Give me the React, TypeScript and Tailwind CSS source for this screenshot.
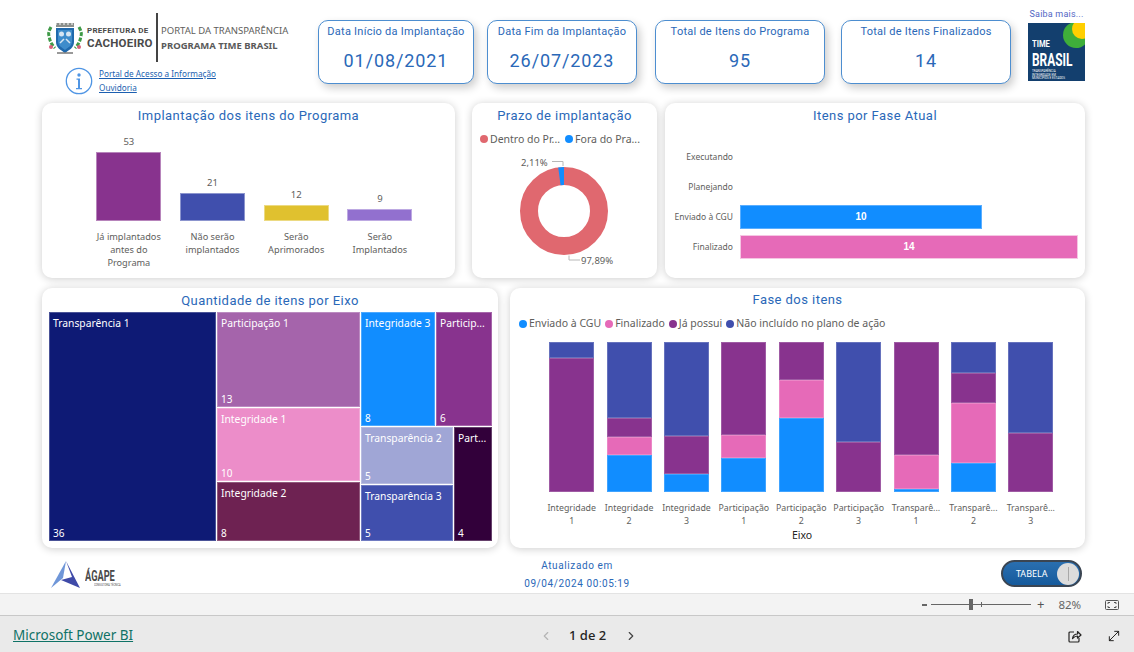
import { ChevronLeft, ChevronRight, MoveDiagonal } from "lucide-react";

const label = "font-['Noto_Sans',sans-serif] text-[#605e5c]";
const titleStyle = "font-['Roboto',sans-serif] text-[13px] tracking-[0.45px] text-[#2a68b8] text-center leading-[18px]";
const cardStyle = "rounded-[10px] bg-white shadow-[0_1px_9px_rgba(0,0,0,0.2)]";

const BLUE = "bg-[#118dff]";
const PINK = "bg-[#e66ab8]";
const PURPLE = "bg-[#88338e]";
const INDIGO = "bg-[#404fad]";

const kpis = [
  { title: "Data Início da Implantação", value: "01/08/2021", width: "w-[156px]", gap: "mr-[13px]" },
  { title: "Data Fim da Implantação", value: "26/07/2023", width: "w-[150px]", gap: "mr-[18px]" },
  { title: "Total de Itens do Programa", value: "95", width: "w-[170px]", gap: "mr-[16px]" },
  { title: "Total de Itens Finalizados", value: "14", width: "w-[170px]", gap: "mr-[17px]" },
];

const implantacao = [
  { value: 53, height: "h-[69px]", color: PURPLE, lines: ["Já implantados", "antes do", "Programa"] },
  { value: 21, height: "h-[28px]", color: INDIGO, lines: ["Não serão", "implantados"] },
  { value: 12, height: "h-[16px]", color: "bg-[#e0c12f]", lines: ["Serão", "Aprimorados"] },
  { value: 9, height: "h-[12.5px]", color: "bg-[#9270cf]", lines: ["Serão", "Implantados"] },
];

// alturas em px de cima para baixo
const fases = [
  { lines: ["Integridade", "1"], segs: [[INDIGO, "h-[15.5px]"], [PURPLE, "h-[134.5px]"]] },
  { lines: ["Integridade", "2"], segs: [[INDIGO, "h-[75.5px]"], [PURPLE, "h-[19px]"], [PINK, "h-[18.5px]"], [BLUE, "h-[37px]"]] },
  { lines: ["Integridade", "3"], segs: [[INDIGO, "h-[94px]"], [PURPLE, "h-[38px]"], [BLUE, "h-[18px]"]] },
  { lines: ["Participação", "1"], segs: [[PURPLE, "h-[92.5px]"], [PINK, "h-[23.5px]"], [BLUE, "h-[34px]"]] },
  { lines: ["Participação", "2"], segs: [[PURPLE, "h-[37.5px]"], [PINK, "h-[38px]"], [BLUE, "h-[74.5px]"]] },
  { lines: ["Participação", "3"], segs: [[INDIGO, "h-[100px]"], [PURPLE, "h-[50px]"]] },
  { lines: ["Transparê...", "1"], segs: [[PURPLE, "h-[113px]"], [PINK, "h-[33.5px]"], [BLUE, "h-[3.5px]"]] },
  { lines: ["Transparê...", "2"], segs: [[INDIGO, "h-[30.5px]"], [PURPLE, "h-[30px]"], [PINK, "h-[60px]"], [BLUE, "h-[29.5px]"]] },
  { lines: ["Transparê...", "3"], segs: [[INDIGO, "h-[90.5px]"], [PURPLE, "h-[59.5px]"]] },
];

function Crest() {
  return (
    <svg width="38" height="34" viewBox="0 0 38 34" className="shrink-0">
      <path d="M10 2h18v4H10z" fill="#8b8f8c" />
      <path d="M10 2v2M14 2v2M18 2v2M22 2v2M26 2v2" stroke="#fff" strokeWidth="1" />
      <path d="M10 7h18v14c0 6-5 8-9 11-4-3-9-5-9-11z" fill="#1f69ad" />
      <path d="M12 9h14v11c0 5-4 6.500-7 9-3-2.500-7-4-7-9z" fill="#3e8ccb" />
      <circle cx="15.500" cy="13" r="2.500" fill="#d8e6f2" />
      <circle cx="22.500" cy="13" r="2.500" fill="#d8e6f2" />
      <path d="M14 22l4-4M24 22l-4-4" stroke="#d8e6f2" strokeWidth="1.500" />
      <path d="M5 6c-2 4-3 6-2 9 1 6 3 9 6 12" fill="none" stroke="#3f9a47" strokeWidth="3" strokeDasharray="4 1.500" />
      <path d="M33 6c2 4 3 6 2 9-1 6-3 9-6 12" fill="none" stroke="#3f9a47" strokeWidth="3" strokeDasharray="4 1.500" />
      <circle cx="5" cy="26" r="2" fill="#d95f7a" />
      <circle cx="33" cy="26" r="2" fill="#d95f7a" />
      <path d="M11 32h16" stroke="#777" strokeWidth="1.500" />
    </svg>
  );
}

function InfoIcon() {
  return (
    <svg width="28" height="28" viewBox="0 0 28 28" className="shrink-0">
      <circle cx="14" cy="14" r="12.700" fill="#fff" stroke="#4f95e4" strokeWidth="1.300" />
      <circle cx="14" cy="8" r="1.700" fill="#4f95e4" />
      <path d="M11.500 11.500h3.500v9.500h2v1.200h-6V21h2v-8.300h-1.500z" fill="#4f95e4" />
    </svg>
  );
}

function Header() {
  return (
    <div className="flex h-[103px] pt-[13px]">
      <div className="ml-[46px] w-[272px] shrink-0">
        <div className="flex h-[49px] items-center">
          <Crest />
          <div className="ml-[3px] w-[65px] font-['Roboto',sans-serif] font-bold text-[#4a4a4a]">
            <div className="text-[8px] leading-[12px] tracking-[0.25px] whitespace-nowrap">PREFEITURA DE</div>
            <div className="text-[11.500px] leading-[13px] tracking-[0.2px] whitespace-nowrap">CACHOEIRO</div>
          </div>
          <div className="ml-[4px] h-[49px] w-[2px] bg-[#444]" />
          <div className={`ml-[3px] text-[9.500px] leading-[15px] whitespace-nowrap ${label}`}>
            <div>PORTAL DA TRANSPARÊNCIA</div>
            <div className="font-bold text-[#5a5a5a]">PROGRAMA TIME BRASIL</div>
          </div>
        </div>
        <div className="mt-[5px] ml-[19px] flex items-center gap-[6px]">
          <InfoIcon />
          <div className="font-['Noto_Sans',sans-serif] text-[8.200px] leading-[14px] text-[#1c5fb0] underline">
            <div>Portal de Acesso a Informação</div>
            <div>Ouvidoria</div>
          </div>
        </div>
      </div>
      {kpis.map((kpi) => (
        <div
          key={kpi.title}
          className={`mt-[7px] h-[64px] shrink-0 rounded-[10px] border border-[#4d8ed0] bg-white text-center font-['Roboto',sans-serif] text-[#2a68b8] shadow-[3px_4px_8px_rgba(0,0,0,0.2)] ${kpi.width} ${kpi.gap}`}
        >
          <div className="mt-[3px] text-[11px] leading-[16px] tracking-[0.25px] whitespace-nowrap">{kpi.title}</div>
          <div className="mt-[8px] text-[18px] leading-[26px] tracking-[0.9px]">{kpi.value}</div>
        </div>
      ))}
      <div className="flex w-[57px] shrink-0 flex-col">
        <div className="-mt-[5px] text-center font-['Roboto',sans-serif] text-[9px] leading-[13px] tracking-[0.2px] whitespace-nowrap text-[#5266c4]">
          Saiba mais...
        </div>
        <div className="relative mt-[2px] h-[58px] w-[57px] overflow-hidden bg-[#133f6e]">
          <svg width="57" height="58" className="absolute inset-0">
            <circle cx="48" cy="12" r="13" fill="#3fae3a" />
            <circle cx="54" cy="6" r="10" fill="#ffcf00" />
          </svg>
          <div className="relative mt-[15px] ml-[4px] font-['Roboto',sans-serif] font-bold text-white">
            <div className="origin-left scale-x-[0.8] text-[9.500px] leading-[11px]">TIME</div>
            <div className="mt-[2px] origin-left scale-x-[0.66] text-[18px] leading-[17px] whitespace-nowrap">BRASIL</div>
            <div className="mt-[2px] text-[3px] leading-[3.500px] font-normal whitespace-nowrap">
              TRANSPARÊNCIA
              <br />
              INTEGRIDADE EM
              <br />
              MUNICÍPIOS E ESTADOS
            </div>
          </div>
        </div>
      </div>
    </div>
  );
}

function ImplantacaoCard() {
  return (
    <div className={`${cardStyle} h-[175px] w-[413px] pt-[4px]`}>
      <div className={titleStyle}>Implantação dos itens do Programa</div>
      <div className="mt-[5px] ml-[45px] flex">
        {implantacao.map((item) => (
          <div key={item.value} className="flex w-[83.700px] flex-col items-center">
            <div className="flex h-[91px] w-[65px] flex-col items-center justify-end">
              <div className={`${label} text-[9.500px] leading-[15px]`}>{item.value}</div>
              <div className={`mt-[3px] w-full border border-white/40 ${item.height} ${item.color}`} />
            </div>
            <div className={`${label} mt-[9px] text-center text-[9.200px] leading-[13px] whitespace-nowrap`}>
              {item.lines.map((line) => (
                <div key={line}>{line}</div>
              ))}
            </div>
          </div>
        ))}
      </div>
    </div>
  );
}

function PrazoCard() {
  return (
    <div className={`${cardStyle} h-[175px] w-[185px] pt-[4px]`}>
      <div className={titleStyle}>Prazo de implantação</div>
      <div className={`${label} mt-[7px] ml-[8px] flex items-center text-[10.500px] leading-[14px] whitespace-nowrap`}>
        <span className="mr-[1px] size-[8px] rounded-full bg-[#e0686f]" />
        <span className="ml-[1px]">Dentro do Pr...</span>
        <span className="mr-[1px] ml-[5px] size-[8px] rounded-full bg-[#118dff]" />
        <span className="ml-[1px]">Fora do Pra...</span>
      </div>
      <svg width="185" height="123" viewBox="0 0 185 123">
        <circle cx="92" cy="65" r="35" fill="none" stroke="#e0686f" strokeWidth="18" />
        <path d="M92 21 A44 44 0 0 0 86.200 21.400 L88.600 39.200 A26 26 0 0 1 92 39 Z" fill="#118dff" />
        <path d="M80 15.500H91V20" fill="none" stroke="#b8b8b8" strokeWidth="1" />
        <path d="M97 109.500V114H108" fill="none" stroke="#b8b8b8" strokeWidth="1" />
        <text x="49" y="19.500" fontSize="9.500" fill="#605e5c" fontFamily="Noto Sans">2,11%</text>
        <text x="109" y="118" fontSize="9.500" fill="#605e5c" fontFamily="Noto Sans">97,89%</text>
      </svg>
    </div>
  );
}

function FaseAtualCard() {
  const rows = [
    { name: "Executando" },
    { name: "Planejando" },
    { name: "Enviado à CGU", value: 10, bar: `w-[242px] ${BLUE} border-[#5aaeff]` },
    { name: "Finalizado", value: 14, bar: `w-[338px] ${PINK} border-[#f5c6e3]` },
  ];
  return (
    <div className={`${cardStyle} h-[175px] w-[420px] pt-[4px]`}>
      <div className={titleStyle}>Itens por Fase Atual</div>
      <div className="mt-[20px] flex flex-col gap-[6px]">
        {rows.map((row) => (
          <div key={row.name} className="flex h-[24px] items-center">
            <div className={`${label} w-[68px] text-right text-[8.500px] whitespace-nowrap`}>{row.name}</div>
            {row.bar && (
              <div
                className={`ml-[7px] h-[24px] border text-center font-['Liberation_Sans',sans-serif] text-[10px] leading-[22px] font-bold text-white ${row.bar}`}
              >
                {row.value}
              </div>
            )}
          </div>
        ))}
      </div>
    </div>
  );
}

function Cell({ name, value, className }: { name: string; value: number; className: string }) {
  return (
    <div
      className={`flex min-h-0 flex-col justify-between border border-white/25 px-[3px] pt-[3px] font-['Noto_Sans',sans-serif] text-[10.300px] leading-[14px] whitespace-nowrap text-white ${className}`}
    >
      <div>{name}</div>
      <div className="text-[10px] leading-[13px]">{value}</div>
    </div>
  );
}

function TreemapCard() {
  return (
    <div className={`${cardStyle} h-[260px] w-[456px] pt-[4px]`}>
      <div className={titleStyle}>Quantidade de itens por Eixo</div>
      <div className="mt-[2px] ml-[7px] flex h-[229px] w-[443px] gap-[1px]">
        <Cell name="Transparência 1" value={36} className="w-[167px] bg-[#0e1a75]" />
        <div className="flex w-[143px] flex-col gap-[1px]">
          <Cell name="Participação 1" value={13} className="h-[95px] bg-[#a564ab]" />
          <Cell name="Integridade 1" value={10} className="h-[73px] bg-[#ec8dc9]" />
          <Cell name="Integridade 2" value={8} className="h-[59px] bg-[#6e2252]" />
        </div>
        <div className="flex w-[131px] flex-col gap-[1px]">
          <div className="flex h-[114px] gap-[1px]">
            <Cell name="Integridade 3" value={8} className="w-[74px] bg-[#118dff]" />
            <Cell name="Particip..." value={6} className="w-[56px] bg-[#88338e]" />
          </div>
          <div className="flex h-[114px] gap-[1px]">
            <div className="flex w-[92px] flex-col gap-[1px]">
              <Cell name="Transparência 2" value={5} className="h-[57px] bg-[#a0a6d6]" />
              <Cell name="Transparência 3" value={5} className="h-[56px] bg-[#404fad]" />
            </div>
            <Cell name="Part..." value={4} className="w-[38px] bg-[#32003a]" />
          </div>
        </div>
      </div>
    </div>
  );
}

function FasesCard() {
  const legend = [
    { name: "Enviado à CGU", color: BLUE },
    { name: "Finalizado", color: PINK },
    { name: "Já possui", color: PURPLE },
    { name: "Não incluído no plano de ação", color: INDIGO },
  ];
  return (
    <div className={`${cardStyle} h-[260px] w-[575px] pt-[3px]`}>
      <div className={titleStyle}>Fase dos itens</div>
      <div className={`${label} mt-[8px] ml-[9px] flex h-[14px] items-center gap-[4px] text-[10.500px] whitespace-nowrap`}>
        {legend.map((item) => (
          <div key={item.name} className="flex items-center gap-[2px]">
            <span className={`size-[8px] rounded-full ${item.color}`} />
            {item.name}
          </div>
        ))}
      </div>
      <div className="mt-[11px] ml-[33px] flex">
        {fases.map((col, i) => (
          <div key={i} className="flex w-[57.400px] flex-col items-center">
            <div className="flex h-[150px] w-[45px] flex-col">
              {col.segs.map(([color, height], j) => (
                <div key={j} className={`border border-white/20 ${color} ${height}`} />
              ))}
            </div>
            <div className={`${label} mt-[10px] text-center text-[8.800px] leading-[13px] whitespace-nowrap`}>
              <div>{col.lines[0]}</div>
              <div>{col.lines[1]}</div>
            </div>
          </div>
        ))}
      </div>
      <div className="ml-[9px] text-center font-['Noto_Sans',sans-serif] text-[10.500px] leading-[14px] text-[#252423]">Eixo</div>
    </div>
  );
}

function ReportFooter() {
  return (
    <div className="flex flex-1 items-center pr-[52px] pl-[51px]">
      <div className="flex w-[200px] items-center">
        <svg width="31" height="28" viewBox="0 0 31 28" className="mt-[8px] shrink-0">
          <path d="M15 0L0 27 12 17z" fill="#6f96d8" />
          <path d="M15 0L21 16 10 19 29 27z" fill="#3f4aa8" />
        </svg>
        <div className="mt-[14px] ml-[3px] font-['Roboto',sans-serif] text-[#4a4a4a]">
          <div className="origin-left scale-x-[0.66] text-[14px] leading-[14px] font-bold whitespace-nowrap">ÁGAPE</div>
          <div className="ml-[9px] origin-left scale-x-[0.7] text-[3.500px] leading-[4px] whitespace-nowrap">CONSULTORIA TÉCNICA</div>
        </div>
      </div>
      <div className="ml-[261px] w-[130px] pt-[8px] text-center font-['Roboto',sans-serif] text-[10px] leading-[18px] tracking-[0.6px] text-[#2a68b8]">
        <div>Atualizado em</div>
        <div className="whitespace-nowrap">09/04/2024 00:05:19</div>
      </div>
      <div className="mt-[6px] ml-auto flex h-[27px] w-[81px] items-center justify-between rounded-full border-2 border-[#3b4552] bg-gradient-to-b from-[#2a6fb0] to-[#155a9c] pr-[1px] pl-[13px]">
        <span className="font-['Noto_Sans',sans-serif] text-[9px] text-white">TABELA</span>
        <span className="flex h-[22px] w-[22px] items-center justify-center rounded-full bg-[#dcdcdc]">
          <span className="h-[14px] w-[1px] bg-[#a8a8a8]" />
        </span>
      </div>
    </div>
  );
}

function ZoomBar() {
  return (
    <div className="flex h-[23px] items-center border-y border-t-[#e3e3e3] border-b-[#c8c8c8] bg-[#f3f3f3] pl-[922px]">
      <span className="h-[2px] w-[5px] bg-[#666]" />
      <div className="relative ml-[4px] flex h-[12px] w-[100px] items-center">
        <div className="h-[1px] w-full bg-[#666]" />
        <span className="absolute left-[38px] h-[11px] w-[4px] bg-[#666]" />
        <span className="absolute left-[50px] h-[5px] w-[1px] bg-[#666]" />
      </div>
      <span className="ml-[6px] font-['Noto_Sans',sans-serif] text-[13px] leading-none text-[#555]">+</span>
      <span className="ml-[14px] font-['Noto_Sans',sans-serif] text-[11.500px] text-[#666]">82%</span>
      <svg width="14" height="10" viewBox="0 0 14 10" className="ml-[24px]">
        <rect x="0.500" y="0.500" width="13" height="9" rx="1" fill="none" stroke="#555" />
        <path d="M3 4V2.500H5M9 2.500H11V4M11 6V7.500H9M5 7.500H3V6" fill="none" stroke="#555" />
      </svg>
    </div>
  );
}

function PageFooter() {
  return (
    <div className="flex flex-1 items-center bg-[#eaeaea] pt-[3px] pl-[13px]">
      <span className="w-[120px] font-['Noto_Sans',sans-serif] text-[13.500px] whitespace-nowrap text-[#0f7266] underline">Microsoft Power BI</span>
      <ChevronLeft size={14} className="ml-[406px] text-[#b5b5b5]" />
      <span className="ml-[16px] font-['Noto_Sans',sans-serif] text-[13px] font-medium text-[#252423]">1 de 2</span>
      <ChevronRight size={14} className="ml-[18px] text-[#444]" />
      <svg width="14" height="14" viewBox="0 0 14 14" className="ml-[430px]">
        <path d="M6 3H2a1 1 0 0 0-1 1v8a1 1 0 0 0 1 1h8a1 1 0 0 0 1-1V9" fill="none" stroke="#252423" strokeWidth="1.200" />
        <path d="M4.500 9.500C5 6.500 7 5 9.500 5V2.500L13 6 9.500 9V7C7.500 7 6 8 4.500 9.500z" fill="none" stroke="#252423" strokeWidth="1.200" strokeLinejoin="round" />
      </svg>
      <MoveDiagonal size={16} strokeWidth={1.500} className="ml-[24px] text-[#252423]" />
    </div>
  );
}

export default function App() {
  return (
    <div className="flex h-[652px] w-[1134px] flex-col overflow-hidden bg-white">
      <div className="flex h-[593px] flex-col">
        <Header />
        <div className="ml-[42px] flex h-[175px] items-start">
          <ImplantacaoCard />
          <div className="ml-[17px]">
            <PrazoCard />
          </div>
          <div className="ml-[8px]">
            <FaseAtualCard />
          </div>
        </div>
        <div className="mt-[10px] ml-[42px] flex h-[260px] gap-[12px]">
          <TreemapCard />
          <FasesCard />
        </div>
        <ReportFooter />
      </div>
      <ZoomBar />
      <PageFooter />
    </div>
  );
}
